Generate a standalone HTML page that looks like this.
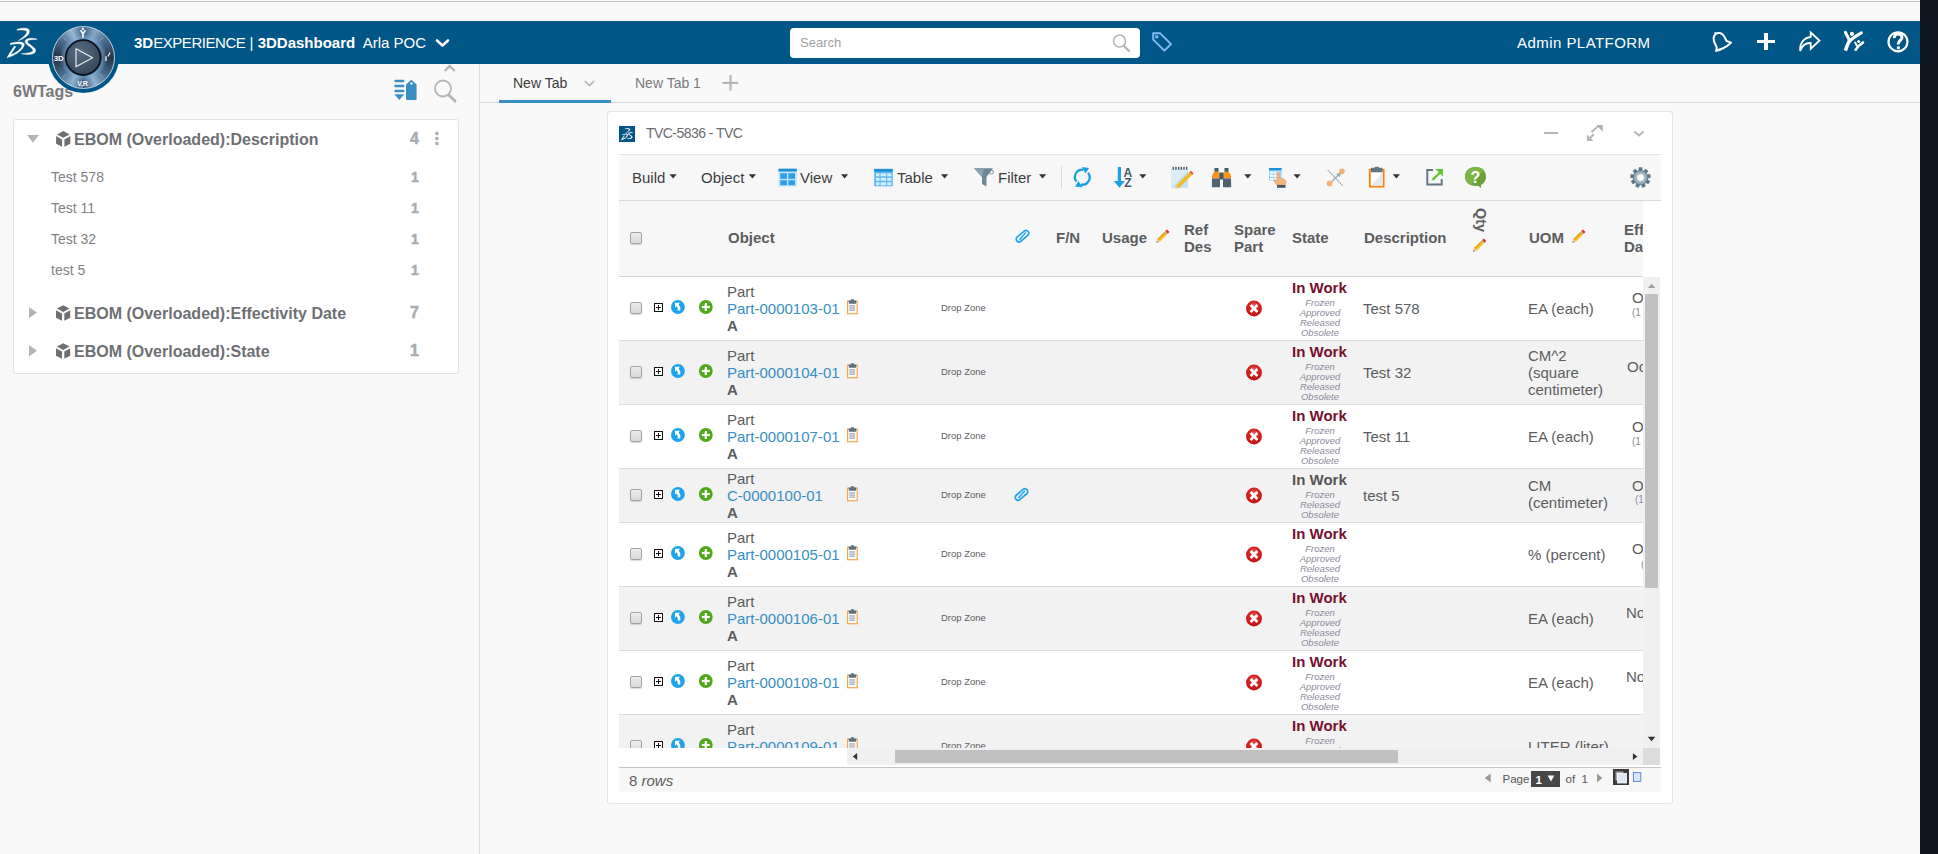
<!DOCTYPE html><html><head><meta charset="utf-8"><style>
*{box-sizing:border-box;margin:0;padding:0}
html,body{width:1938px;height:854px;overflow:hidden;background:#f9f9f9;font-family:"Liberation Sans",sans-serif;position:relative}
.a{position:absolute;white-space:nowrap}
.ht{color:#fff;font-size:15px;line-height:18px}
.tr{color:#808285;font-size:14px;line-height:16px}
.th{font-weight:bold;color:#6d6f73;font-size:16px;line-height:18px}
.cnt{color:#a9abae;font-weight:bold;font-size:14px;line-height:16px;-webkit-text-stroke:0.5px #a9abae}
.cb{width:12px;height:12px;border:1px solid #a3a3a3;border-radius:2px;background:linear-gradient(#ececec,#d9d9d9);box-shadow:0 1px 1px rgba(0,0,0,.15)}
.hc{font-weight:bold;color:#5b5d5e;font-size:15px;line-height:17px}
.rc{color:#5b5d5e;font-size:15px;line-height:17px}
.lnk{color:#368ec4}
.dz{font-size:9.5px;color:#5b5d5e;line-height:10px}
.iw{font-weight:bold;color:#76102f;font-size:15px;line-height:17px}
.st{font-style:italic;color:#8b8b9b;font-size:9.5px;line-height:10px;text-align:center;width:60px}
.tb{color:#3d3d3d;font-size:15px;line-height:18px}
.sm{color:#8b8b9b;font-size:10px;line-height:10px}
</style></head><body>
<div class="a" style="left:0;top:1px;width:1920px;height:1px;background:#c4c4c4"></div>
<div class="a" style="left:1920px;top:0;width:18px;height:854px;background:#0e141d"></div>
<div class="a" style="left:0;top:21px;width:1920px;height:43px;background:#005686"></div>
<div class="a ht" style="left:134px;top:34px;"><b>3D</b><span style="letter-spacing:-0.45px">EXPERIENCE</span> | <b>3DDashboard</b>&nbsp; Arla POC</div>
<div class="a ht" style="left:1517px;top:34px;letter-spacing:0.45px">Admin PLATFORM</div>
<div class="a" style="left:790px;top:28px;width:350px;height:30px;background:#fff;border-radius:4px"></div>
<div class="a" style="left:800px;top:35px;font-size:13px;line-height:15px;color:#a0a2a5">Search</div>
<div class="a" style="left:479px;top:64px;width:1px;height:790px;background:#dcdcdc"></div>
<div class="a" style="left:13px;top:83px;font-size:16px;line-height:18px;font-weight:bold;color:#77797c">6WTags</div>
<div class="a" style="left:13px;top:119px;width:446px;height:255px;background:#fff;border:1px solid #e2e2e2;border-radius:3px"></div>
<div class="a th" style="left:74px;top:131px">EBOM (Overloaded):Description</div>
<div class="a cnt" style="left:410px;top:130px;font-size:16px;line-height:18px">4</div>
<div class="a tr" style="left:51px;top:169px">Test 578</div>
<div class="a cnt" style="left:411px;top:169px">1</div>
<div class="a tr" style="left:51px;top:200px">Test 11</div>
<div class="a cnt" style="left:411px;top:200px">1</div>
<div class="a tr" style="left:51px;top:231px">Test 32</div>
<div class="a cnt" style="left:411px;top:231px">1</div>
<div class="a tr" style="left:51px;top:262px">test 5</div>
<div class="a cnt" style="left:411px;top:262px">1</div>
<div class="a th" style="left:74px;top:305px">EBOM (Overloaded):Effectivity Date</div>
<div class="a cnt" style="left:410px;top:304px;font-size:16px;line-height:18px">7</div>
<div class="a th" style="left:74px;top:343px">EBOM (Overloaded):State</div>
<div class="a cnt" style="left:410px;top:342px;font-size:16px;line-height:18px">1</div>
<div class="a" style="left:480px;top:102px;width:1440px;height:1px;background:#d9d9d9"></div>
<div class="a" style="left:513px;top:75px;font-size:14px;line-height:16px;color:#3d3d3d">New Tab</div>
<div class="a" style="left:499px;top:100px;width:112px;height:3px;background:#368ec4"></div>
<div class="a" style="left:635px;top:75px;font-size:14px;line-height:16px;color:#77797c">New Tab 1</div>
<div class="a" style="left:607px;top:111px;width:1066px;height:693px;background:#fff;border:1px solid #e3e3e3;border-radius:3px"></div>
<div class="a" style="left:619px;top:126px;width:16px;height:16px;background:#005686"></div>
<div class="a" style="left:646px;top:125px;font-size:14px;line-height:16px;letter-spacing:-0.55px;color:#6b6d70">TVC-5836 - TVC</div>
<div class="a" style="left:619px;top:154px;width:1042px;height:47px;background:#f7f7f7;border-top:1px solid #e2e2e2;border-bottom:1px solid #d9d9d9"></div>
<div class="a tb" style="left:632px;top:169px">Build</div>
<div class="a tb" style="left:701px;top:169px">Object</div>
<div class="a tb" style="left:800px;top:169px">View</div>
<div class="a tb" style="left:897px;top:169px">Table</div>
<div class="a tb" style="left:998px;top:169px">Filter</div>
<div class="a" style="left:1061px;top:166px;width:1px;height:23px;background:#dcdcdc"></div>
<div class="a" style="left:619px;top:201px;width:1024px;height:77px;background:#f7f7f7;border-bottom:2px solid #d6d6d6"></div>
<div class="a cb" style="left:630px;top:232px"></div>
<div class="a hc" style="left:728px;top:229px">Object</div>
<div class="a hc" style="left:1056px;top:229px">F/N</div>
<div class="a hc" style="left:1102px;top:229px">Usage</div>
<div class="a hc" style="left:1184px;top:221px">Ref<br>Des</div>
<div class="a hc" style="left:1234px;top:221px">Spare<br>Part</div>
<div class="a hc" style="left:1292px;top:229px">State</div>
<div class="a hc" style="left:1364px;top:229px">Description</div>
<div class="a hc" style="left:1529px;top:229px">UOM</div>
<div class="a" style="left:1624px;top:221px;width:19px;overflow:hidden"><div class="hc">Eff<br>Da</div></div>
<div class="a hc" style="left:1488.5px;top:207.5px;font-size:14.5px;transform-origin:0 0;transform:rotate(90deg)">Qty</div>
<div class="a" style="left:619px;top:277px;width:1024px;height:471px;overflow:hidden">
<div class="a" style="left:0;top:0px;width:1024px;height:64px;background:#fff;border-bottom:1px solid #dcdcdc"></div>
<div class="a cb" style="left:11px;top:25px"></div>
<div class="a rc" style="left:108px;top:6px">Part<br><span class="lnk">Part-0000103-01</span><br><b>A</b></div>
<div class="a dz" style="left:322px;top:26px">Drop Zone</div>
<div class="a iw" style="left:673px;top:2px;">In Work</div>
<div class="a st" style="left:671px;top:20.5px">Frozen<br>Approved<br>Released<br>Obsolete</div>
<div class="a rc" style="left:744px;top:23px">Test 578</div>
<div class="a rc" style="left:909px;top:23.0px">EA (each)</div>
<div class="a rc" style="left:1013px;top:11.5px">O</div>
<div class="a sm" style="left:1013px;top:31.30000000000001px">(1</div>
<div class="a" style="left:0;top:64px;width:1024px;height:64px;background:#f2f2f2;border-bottom:1px solid #dcdcdc"></div>
<div class="a cb" style="left:11px;top:89px"></div>
<div class="a rc" style="left:108px;top:70px">Part<br><span class="lnk">Part-0000104-01</span><br><b>A</b></div>
<div class="a dz" style="left:322px;top:90px">Drop Zone</div>
<div class="a iw" style="left:673px;top:66px;">In Work</div>
<div class="a st" style="left:671px;top:84.5px">Frozen<br>Approved<br>Released<br>Obsolete</div>
<div class="a rc" style="left:744px;top:87px">Test 32</div>
<div class="a rc" style="left:909px;top:70.0px">CM^2<br>(square<br>centimeter)</div>
<div class="a rc" style="left:1008px;top:81px">Oc</div>
<div class="a" style="left:0;top:128px;width:1024px;height:64px;background:#fff;border-bottom:1px solid #dcdcdc"></div>
<div class="a cb" style="left:11px;top:153px"></div>
<div class="a rc" style="left:108px;top:134px">Part<br><span class="lnk">Part-0000107-01</span><br><b>A</b></div>
<div class="a dz" style="left:322px;top:154px">Drop Zone</div>
<div class="a iw" style="left:673px;top:130px;">In Work</div>
<div class="a st" style="left:671px;top:148.5px">Frozen<br>Approved<br>Released<br>Obsolete</div>
<div class="a rc" style="left:744px;top:151px">Test 11</div>
<div class="a rc" style="left:909px;top:151.0px">EA (each)</div>
<div class="a rc" style="left:1013px;top:140.5px">O</div>
<div class="a sm" style="left:1013px;top:159.5px">(1</div>
<div class="a" style="left:0;top:192px;width:1024px;height:54px;background:#f2f2f2;border-bottom:1px solid #dcdcdc"></div>
<div class="a cb" style="left:11px;top:212px"></div>
<div class="a rc" style="left:108px;top:193px">Part<br><span class="lnk">C-0000100-01</span><br><b>A</b></div>
<div class="a dz" style="left:322px;top:213px">Drop Zone</div>
<div class="a iw" style="left:673px;top:194px;color:#555555;">In Work</div>
<div class="a st" style="left:671px;top:212.5px">Frozen<br>Released<br>Obsolete</div>
<div class="a rc" style="left:744px;top:210px">test 5</div>
<div class="a rc" style="left:909px;top:200px">CM<br>(centimeter)</div>
<div class="a rc" style="left:1013px;top:199.5px">O</div>
<div class="a sm" style="left:1016px;top:217.5px">(1</div>
<div class="a" style="left:0;top:246px;width:1024px;height:64px;background:#fff;border-bottom:1px solid #dcdcdc"></div>
<div class="a cb" style="left:11px;top:271px"></div>
<div class="a rc" style="left:108px;top:252px">Part<br><span class="lnk">Part-0000105-01</span><br><b>A</b></div>
<div class="a dz" style="left:322px;top:272px">Drop Zone</div>
<div class="a iw" style="left:673px;top:248px;">In Work</div>
<div class="a st" style="left:671px;top:266.5px">Frozen<br>Approved<br>Released<br>Obsolete</div>
<div class="a rc" style="left:909px;top:269.0px">% (percent)</div>
<div class="a rc" style="left:1013px;top:262.5px">O</div>
<div class="a sm" style="left:1022px;top:282.5px">(</div>
<div class="a" style="left:0;top:310px;width:1024px;height:64px;background:#f2f2f2;border-bottom:1px solid #dcdcdc"></div>
<div class="a cb" style="left:11px;top:335px"></div>
<div class="a rc" style="left:108px;top:316px">Part<br><span class="lnk">Part-0000106-01</span><br><b>A</b></div>
<div class="a dz" style="left:322px;top:336px">Drop Zone</div>
<div class="a iw" style="left:673px;top:312px;">In Work</div>
<div class="a st" style="left:671px;top:330.5px">Frozen<br>Approved<br>Released<br>Obsolete</div>
<div class="a rc" style="left:909px;top:333.0px">EA (each)</div>
<div class="a rc" style="left:1007px;top:327px">No</div>
<div class="a" style="left:0;top:374px;width:1024px;height:64px;background:#fff;border-bottom:1px solid #dcdcdc"></div>
<div class="a cb" style="left:11px;top:399px"></div>
<div class="a rc" style="left:108px;top:380px">Part<br><span class="lnk">Part-0000108-01</span><br><b>A</b></div>
<div class="a dz" style="left:322px;top:400px">Drop Zone</div>
<div class="a iw" style="left:673px;top:376px;">In Work</div>
<div class="a st" style="left:671px;top:394.5px">Frozen<br>Approved<br>Released<br>Obsolete</div>
<div class="a rc" style="left:909px;top:397.0px">EA (each)</div>
<div class="a rc" style="left:1007px;top:391px">No</div>
<div class="a" style="left:0;top:438px;width:1024px;height:64px;background:#f2f2f2;border-bottom:1px solid #dcdcdc"></div>
<div class="a cb" style="left:11px;top:463px"></div>
<div class="a rc" style="left:108px;top:444px">Part<br><span class="lnk">Part-0000109-01</span><br><b>A</b></div>
<div class="a dz" style="left:322px;top:464px">Drop Zone</div>
<div class="a iw" style="left:673px;top:440px;">In Work</div>
<div class="a st" style="left:671px;top:458.5px">Frozen<br>Approved<br>Released<br>Obsolete</div>
<div class="a rc" style="left:909px;top:461.0px">LITER (liter)</div>
</div>
<div class="a" style="left:619px;top:748px;width:228px;height:17px;background:#fff"></div>
<div class="a" style="left:847px;top:748px;width:796px;height:17px;background:#f0f0f0"></div>
<div class="a" style="left:895px;top:750px;width:503px;height:13px;background:#c1c1c1"></div>
<div class="a" style="left:1643px;top:277px;width:17px;height:471px;background:#f0f0f0"></div>
<div class="a" style="left:1645px;top:294px;width:13px;height:294px;background:#c1c1c1"></div>
<div class="a" style="left:1643px;top:748px;width:17px;height:17px;background:#dcdcdc"></div>
<div class="a" style="left:619px;top:767px;width:1042px;height:25px;background:#f7f7f7;border-top:1.5px solid #c4c4c4;border-radius:0 0 3px 3px"></div>
<div class="a" style="left:629px;top:772px;font-size:15px;line-height:17px;color:#5b5d5e">8 <i>rows</i></div>
<div class="a" style="left:1502.5px;top:773px;font-size:11.5px;line-height:13px;color:#555">Page</div>
<div class="a" style="left:1531px;top:771px;width:29px;height:16px;background:#474747"></div>
<div class="a" style="left:1535.5px;top:773.5px;font-size:11.5px;line-height:13px;color:#fff;font-weight:bold">1</div>
<div class="a" style="left:1565.5px;top:773px;font-size:11.5px;line-height:13px;color:#555">of&nbsp; 1</div>
<div class="a" style="left:1613px;top:769px;width:16px;height:16px;background:#3a3a3a"></div>
<div class="a" style="left:47.8px;top:21.5px;width:71px;height:71px;border-radius:50%;background:#005686"></div><div class="a" style="left:51.5px;top:25.9px;width:63px;height:63px;border-radius:50%;border:1px solid #c3d0db;background:radial-gradient(circle at 50% 50%, rgba(0,0,0,0) 17px, rgba(125,175,220,.55) 19px, rgba(0,0,0,0) 24px),conic-gradient(#3f5f80 0deg, #86a8c6 24deg, #4a6a8c 52deg, #24364a 90deg, #4a6a8c 128deg, #90b2d0 156deg, #3f5f80 180deg, #90b2d0 204deg, #4a6a8c 232deg, #1e2f42 270deg, #4a6a8c 308deg, #9ab8d4 336deg, #3f5f80 360deg)"></div><svg class="a" style="left:0;top:0" width="130" height="100" viewBox="0 0 130 100"><defs><radialGradient id="inner" cx="40%" cy="35%" r="70%"><stop offset="0" stop-color="#566c80"/><stop offset="1" stop-color="#34475a"/></radialGradient></defs><circle cx="83.1" cy="57.6" r="17.4" fill="url(#inner)" stroke="#0c131a" stroke-width="1.8"/><path d="M76,48.8 L92.6,57.8 L76,66.8 Z" fill="none" stroke="#e6edf2" stroke-width="1.2" stroke-linejoin="round"/><line x1="99.6" y1="74.0" x2="103.2" y2="77.6" stroke="#a8bccb" stroke-width="0.7"/><line x1="66.4" y1="74.0" x2="62.8" y2="77.6" stroke="#a8bccb" stroke-width="0.7"/><line x1="66.4" y1="40.8" x2="62.8" y2="37.2" stroke="#a8bccb" stroke-width="0.7"/><line x1="99.6" y1="40.8" x2="103.2" y2="37.2" stroke="#a8bccb" stroke-width="0.7"/><text x="53.8" y="61.3" font-size="8" font-weight="bold" fill="#fff" font-family="Liberation Sans" letter-spacing="-0.3">3D</text><text x="77.3" y="85.6" font-size="7" font-weight="bold" fill="#fff" font-family="Liberation Sans" letter-spacing="-0.2">V,R</text><text x="104.8" y="61.3" font-size="8" font-weight="bold" fill="#fff" font-family="Liberation Sans">i</text><path d="M108,56.5 L110,52.5" stroke="#fff" stroke-width="1.1"/><path d="M80.6,30.3 L83,33.6 L85.4,30.3 M83,33.6 L83,37.8" stroke="#fff" stroke-width="1.6" fill="none"/><circle cx="83" cy="28.9" r="1.3" fill="#dfe7ee"/></svg>
<svg class="a" style="left:0;top:0" width="1938" height="854" viewBox="0 0 1938 854"><defs><radialGradient id="redg" cx="50%" cy="35%" r="60%"><stop offset="0" stop-color="#ea6a6a"/><stop offset="0.5" stop-color="#d42525"/><stop offset="1" stop-color="#c41414"/></radialGradient><linearGradient id="ring" x1="0" y1="0" x2="1" y2="1"><stop offset="0" stop-color="#7f9bb5"/><stop offset="0.45" stop-color="#4d6d8c"/><stop offset="1" stop-color="#25384b"/></linearGradient><radialGradient id="gearg" cx="50%" cy="50%" r="50%"><stop offset="0.5" stop-color="#b3c4cc"/><stop offset="0.85" stop-color="#8ea6b1"/><stop offset="1" stop-color="#6a8695"/></radialGradient><clipPath id="rowclip"><rect x="619" y="277" width="1024" height="471"/></clipPath></defs><g id="dslogo" fill="#fff" stroke="#fff" stroke-width="0.45"><path d="M17,29.4 C20,28.3 24.5,27.8 27.5,28.6 C29.6,29.3 29.9,31.6 28.6,34 C27,36.8 22,39.3 18.3,40.7 C21.5,38.6 24.8,36 26.2,33.8 C27.3,32 27,30.6 25,30.2 C22.5,29.8 19.5,29.9 17,30.2 Z"/><path d="M10.2,43.4 C14,42.2 19.5,41.5 22.6,42.4 C24.6,43 24.7,45 23.4,47.3 C21,51.5 14.5,55.6 7,57.8 C9.2,53.8 11.8,49.6 14.5,46.1 L15.7,46.8 C13.8,50 11.8,52.8 10.3,55 C14.5,53.6 18.8,50.8 21,47.8 C22.4,45.8 22.3,44.3 20.5,44 C17.5,43.6 13.5,44 10.2,44.5 Z"/><path d="M37.2,39.2 C33.5,38 28.5,37.9 26.2,39.6 C24.6,40.9 24.8,42.8 26.2,44 C28,45.6 31.5,47.3 32.8,49.4 C33.5,50.8 32,52.2 29.5,52.7 C27,53.2 24,53.5 21.4,53.8 C25,54.7 30,54.9 33.5,53.6 C35.8,52.6 36.1,50.6 35,48.8 C33.5,46.5 30,44.6 28.4,43.2 C27,42 27.3,40.6 29,40.1 C31.2,39.5 34.5,39.5 37.2,39.2 Z"/></g><path d="M437,40.5 L442.5,45.5 L448,40.5" fill="none" stroke="#fff" stroke-width="2.6" stroke-linecap="round" stroke-linejoin="round"/><circle cx="1119.5" cy="41.1" r="6" fill="none" stroke="#b4b5b8" stroke-width="1.5"/><path d="M1124,46 L1129,51" stroke="#b4b5b8" stroke-width="2.4" stroke-linecap="round"/><path d="M1153.2,33.3 L1160.2,33.3 L1171,44.1 L1164.4,50.7 L1153.2,39.6 Z" fill="none" stroke="#7fbef5" stroke-width="1.9" stroke-linejoin="round"/><rect x="1155.3" y="35.3" width="3" height="3" fill="#7fbef5"/><path d="M1716,50.8 C1719.5,50.3 1727.5,46.8 1731,42.6 C1729.3,41.7 1727.8,41.6 1726.4,40.9 C1724.8,37.3 1723.8,33.6 1719.8,33 C1716.2,32.6 1713.8,34.8 1713.6,38.6 C1713.4,42.6 1716.4,45.4 1716.8,47.9 Z" fill="none" stroke="#fff" stroke-width="2" stroke-linejoin="round"/><path d="M1715.5,51.6 C1720.5,50.8 1728,47 1731.6,42.4 L1729.8,43.2 C1726,46.2 1720.5,48.6 1716.2,49.2 Z" fill="#fff"/><circle cx="1715.6" cy="33.2" r="1.3" fill="#fff"/><rect x="1764" y="33" width="4" height="17" fill="#fff"/><rect x="1757" y="40" width="18" height="3" fill="#fff"/><path d="M1810.7,32.5 L1819.5,40.5 L1810.7,48.8 L1810.7,43 C1806,42.8 1802,45.5 1800.2,51 C1799.5,44 1803.5,37.5 1810.7,37 Z" fill="none" stroke="#fff" stroke-width="1.8" stroke-linejoin="miter"/><path d="M1845.4,32.4 L1849.8,40.8" fill="none" stroke="#fff" stroke-width="3" stroke-linecap="round"/><path d="M1861.3,32.9 Q1853.5,37.3 1849.4,41.3" fill="none" stroke="#fff" stroke-width="3.2" stroke-linecap="round"/><path d="M1849.6,40.3 Q1847.2,45 1845.4,50.6" fill="none" stroke="#fff" stroke-width="3.5" stroke-linecap="butt"/><circle cx="1851.9" cy="33.9" r="2.1" fill="#fff"/><path d="M1863.8,41.8 Q1858,45.5 1855,50.6" fill="none" stroke="#fff" stroke-width="2.6" stroke-linecap="butt"/><path d="M1854.8,41.9 L1857.2,46.2" fill="none" stroke="#fff" stroke-width="2"/><circle cx="1858.7" cy="41.4" r="1.5" fill="#fff"/><circle cx="1898" cy="41.8" r="9.5" fill="none" stroke="#fff" stroke-width="2.2"/><path d="M1894.3,38.2 C1894.1,35.2 1896,34 1898.1,34 C1900.4,34 1902,35.4 1902,37.5 C1902,40.2 1898.3,40.6 1898.3,43.6 L1898.3,44.6" fill="none" stroke="#fff" stroke-width="3"/><rect x="1896.9" y="46.4" width="2.9" height="2.8" fill="#fff"/><path d="M444.7,71 L449.7,66 L454.7,71" fill="none" stroke="#b4b5b8" stroke-width="2.4"/><rect x="394.4" y="79.8" width="10" height="2.4" rx="1" fill="#3a8ec4"/><rect x="394.4" y="84.8" width="10" height="2.4" rx="1" fill="#3a8ec4"/><rect x="394.4" y="89.8" width="10" height="2.4" rx="1" fill="#3a8ec4"/><path d="M394.4,94.3 L404.3,94.3 L399.3,100 Z" fill="#3a8ec4"/><path d="M406,84.5 L411.3,79.8 L416.6,84.5 L416.6,99 Q416.6,100 415.6,100 L407,100 Q406,100 406,99 Z" fill="#3a8ec4"/><path d="M411.5,82 L413,83.5 L411.5,85 L410,83.5 Z" fill="#fff"/><circle cx="443" cy="88.5" r="8" fill="none" stroke="#b4b5b8" stroke-width="1.8"/><path d="M448.8,95 L455,101" stroke="#b4b5b8" stroke-width="3" stroke-linecap="round"/><path d="M27,135.1 L39,135.1 L32.9,142.8 Z" fill="#b2b4b8"/><path d="M29,307 L36.9,312.6 L29,318.3 Z" fill="#b2b4b8"/><path d="M29,345 L36.9,350.7 L29,356.4 Z" fill="#b2b4b8"/><g fill="#6d6f73" transform="translate(63.3,131.1)"><path d="M0,0 L6.3,3.4 L0,6.7 L-6.3,3.4 Z"/><path d="M-7.2,5 L-1.2,8.3 L-1.2,15.6 L-7.2,12.6 Z"/><path d="M7,5 L1.1,8.3 L1.1,15.6 L7,12.6 Z"/></g><g fill="#6d6f73" transform="translate(63.2,305.2)"><path d="M0,0 L6.3,3.4 L0,6.7 L-6.3,3.4 Z"/><path d="M-7.2,5 L-1.2,8.3 L-1.2,15.6 L-7.2,12.6 Z"/><path d="M7,5 L1.1,8.3 L1.1,15.6 L7,12.6 Z"/></g><g fill="#6d6f73" transform="translate(63.2,343.2)"><path d="M0,0 L6.3,3.4 L0,6.7 L-6.3,3.4 Z"/><path d="M-7.2,5 L-1.2,8.3 L-1.2,15.6 L-7.2,12.6 Z"/><path d="M7,5 L1.1,8.3 L1.1,15.6 L7,12.6 Z"/></g><circle cx="436.9" cy="133.4" r="1.8" fill="#a9abae"/><circle cx="436.9" cy="138.6" r="1.8" fill="#a9abae"/><circle cx="436.9" cy="143.6" r="1.8" fill="#a9abae"/><path d="M584.8,81.2 L589.4,85.6 L594,81.2" fill="none" stroke="#b4b5b8" stroke-width="1.6"/><rect x="729.4" y="75" width="2.2" height="15.5" fill="#b4b5b8"/><rect x="722.5" y="81.8" width="15.7" height="2.2" fill="#b4b5b8"/><use href="#dslogo" transform="translate(618.2,117) scale(0.4)"/><rect x="1544" y="132" width="14" height="2" fill="#b4b5b8"/><path d="M1596.2,125.1 L1602.8,125.1 L1602.8,131.7 Z M1586.9,134.4 L1586.9,140.9 L1593.5,140.9 Z" fill="#b4b5b8"/><path d="M1591.5,132 L1598.5,126 M1589.5,138.5 L1593.8,134.2" stroke="#b4b5b8" stroke-width="2"/><path d="M1634.3,131.5 L1639,135.5 L1643.7,131.5" fill="none" stroke="#b4b5b8" stroke-width="1.8"/><path d="M669.5,174.3 L676.7,174.3 L673.1,178.6 Z" fill="#333"/><path d="M748.8,174.3 L756.0,174.3 L752.4,178.6 Z" fill="#333"/><path d="M841,174.3 L848.2,174.3 L844.6,178.6 Z" fill="#333"/><path d="M941,174.3 L948.2,174.3 L944.6,178.6 Z" fill="#333"/><path d="M1039,174.3 L1046.2,174.3 L1042.6,178.6 Z" fill="#333"/><path d="M1139.2,174.3 L1146.4,174.3 L1142.8,178.6 Z" fill="#333"/><path d="M1244.2,174.3 L1251.4,174.3 L1247.8,178.6 Z" fill="#333"/><path d="M1293.5,174.3 L1300.7,174.3 L1297.1,178.6 Z" fill="#333"/><path d="M1392.8,174.3 L1400.0,174.3 L1396.3999999999999,178.6 Z" fill="#333"/><rect x="778.5" y="168.7" width="18.3" height="17.9" fill="#bfe3fa"/><rect x="778.5" y="168.7" width="18.3" height="2.8" fill="#1a8fd8"/><rect x="780.3" y="173.3" width="6.6" height="5.5" fill="#2a9ee6"/><rect x="788.4" y="173.3" width="6.6" height="5.5" fill="#2a9ee6"/><rect x="780.3" y="180.2" width="6.6" height="5" fill="#2a9ee6"/><rect x="788.4" y="180.2" width="6.6" height="5" fill="#2a9ee6"/><rect x="874.2" y="168.9" width="18.6" height="17.4" fill="#5bb8f0"/><rect x="874.2" y="168.9" width="18.6" height="2.8" fill="#1a8fd8"/><rect x="876" y="173.3" width="3.5" height="3" fill="#d6eefc"/><rect x="880.6" y="173.3" width="5.5" height="3" fill="#d6eefc"/><rect x="887.2" y="173.3" width="4.2" height="3" fill="#d6eefc"/><rect x="876" y="177.8" width="3.5" height="3" fill="#d6eefc"/><rect x="880.6" y="177.8" width="5.5" height="3" fill="#d6eefc"/><rect x="887.2" y="177.8" width="4.2" height="3" fill="#d6eefc"/><rect x="876" y="182.3" width="3.5" height="3" fill="#d6eefc"/><rect x="880.6" y="182.3" width="5.5" height="3" fill="#d6eefc"/><rect x="887.2" y="182.3" width="4.2" height="3" fill="#d6eefc"/><path d="M974,168.2 L993,168.2 L986.5,177 L986.5,186.5 L982,184 L982,177 Z" fill="#6d8795"/><path d="M974,168.2 L984,168.2 L982,177 Z" fill="#8aa2ae"/><circle cx="991.5" cy="172.2" r="2" fill="none" stroke="#6d8795" stroke-width="0.9"/><path d="M1076.5,181.5 A7.3,7.3 0 0 1 1083.5,169.8" fill="none" stroke="#1ba1e2" stroke-width="2.3"/><path d="M1088,172.8 A7.3,7.3 0 0 1 1081,184.6" fill="none" stroke="#1ba1e2" stroke-width="2.3"/><path d="M1082,167 L1089,168 L1085.5,173.5 Z" fill="#1ba1e2"/><path d="M1082.5,187.5 L1075,186.5 L1078.5,181 Z" fill="#1ba1e2"/><rect x="1117.8" y="167" width="3.2" height="16" fill="#1ba1e2"/><path d="M1113.8,181 L1125,181 L1119.4,187.8 Z" fill="#1ba1e2"/><text x="1123.6" y="177.3" font-size="12" font-weight="bold" fill="#455a64" font-family="Liberation Sans">A</text><text x="1124.2" y="186.9" font-size="12" font-weight="bold" fill="#455a64" font-family="Liberation Sans">Z</text><rect x="1171" y="168.5" width="17" height="19.3" fill="#dcedf8"/><path d="M1171,187.8 L1188,170 L1188,187.8 Z" fill="#c5e2f5"/><rect x="1172.5" y="166.8" width="1.4" height="3" fill="#455a64"/><rect x="1175.2" y="166.8" width="1.4" height="3" fill="#455a64"/><rect x="1177.9" y="166.8" width="1.4" height="3" fill="#455a64"/><rect x="1180.6" y="166.8" width="1.4" height="3" fill="#455a64"/><rect x="1183.3" y="166.8" width="1.4" height="3" fill="#455a64"/><rect x="1186.0" y="166.8" width="1.4" height="3" fill="#455a64"/><path d="M1176,185.5 L1189.5,172 L1192.3,174.8 L1178.8,188.3 Z" fill="#f4b92a"/><path d="M1189.5,172 L1190.8,170.7 L1193.6,173.5 L1192.3,174.8 Z" fill="#e8462b"/><path d="M1176,185.5 L1178.8,188.3 L1175,189 Z" fill="#f3c9a0"/><rect x="1214.5" y="168" width="4" height="4" fill="#455a64"/><rect x="1224.5" y="168" width="4" height="4" fill="#455a64"/><path d="M1212,176 Q1213,171.5 1216.5,171.5 Q1220,171.5 1220,175 L1220,178.5 L1212,178.5 Z" fill="#f7931e"/><path d="M1223,175 Q1223,171.5 1226.5,171.5 Q1230,171.5 1231,176 L1231,178.5 L1223,178.5 Z" fill="#f7931e"/><rect x="1219.5" y="172.5" width="4" height="7" fill="#455a64"/><path d="M1212,178.5 L1220,178.5 L1220,187.2 L1211.8,187.2 Z" fill="#4f6370"/><path d="M1223,178.5 L1231,178.5 L1231.2,187.2 L1223,187.2 Z" fill="#4f6370"/><rect x="1269" y="168" width="12.5" height="12.5" fill="#8fd0f7"/><rect x="1269" y="168" width="12.5" height="2.2" fill="#1a8fd8"/><rect x="1270" y="171.5" width="3" height="2.2" fill="#fff"/><rect x="1273.6" y="171.5" width="3" height="2.2" fill="#fff"/><rect x="1277.2" y="171.5" width="3" height="2.2" fill="#fff"/><rect x="1270" y="174.7" width="3" height="2.2" fill="#fff"/><rect x="1273.6" y="174.7" width="3" height="2.2" fill="#fff"/><rect x="1277.2" y="174.7" width="3" height="2.2" fill="#fff"/><rect x="1270" y="177.9" width="3" height="2.2" fill="#fff"/><rect x="1273.6" y="177.9" width="3" height="2.2" fill="#fff"/><rect x="1277.2" y="177.9" width="3" height="2.2" fill="#fff"/><path d="M1277.3,172.5 Q1278.5,171.5 1279.7,172.5 L1279.7,178 L1283,178.5 Q1286,179.5 1286,182.5 L1285.5,185 L1276.5,185 L1273.8,180.5 Q1274.5,179 1276,180 L1277.3,181 Z" fill="#f5b57a" stroke="#c88550" stroke-width="0.4"/><rect x="1277" y="185" width="8.5" height="2.8" fill="#455a64"/><path d="M1328,170.3 L1342.5,185.5" stroke="#4a4a4a" stroke-width="1" stroke-dasharray="1.6,1.2"/><path d="M1330,183.3 L1340,173.5" stroke="#98acb6" stroke-width="1.3"/><path d="M1341,172.5 L1336.3,173.8 L1339.8,177.3 Z" fill="#98acb6"/><circle cx="1341.9" cy="171.3" r="2.9" fill="#f4b27a"/><circle cx="1329.6" cy="183.5" r="2.9" fill="#f4b27a"/><rect x="1369.8" y="169.8" width="13.8" height="16.8" fill="#fff" stroke="#ff7f00" stroke-width="1.8"/><path d="M1371,186 L1382.5,172 L1382.5,186 Z" fill="#e6e9ec"/><path d="M1371,167.8 L1382.5,167.8 L1382.5,172.3 L1371,172.3 Z" fill="#5f7683"/><rect x="1374.5" y="166.8" width="4.5" height="2" rx="1" fill="#5f7683"/><path d="M1433,170 L1427.3,170 L1427.3,184.5 L1441.7,184.5 L1441.7,179" fill="none" stroke="#5f7683" stroke-width="1.9"/><path d="M1432.5,180 L1440,172.5" stroke="#64c52e" stroke-width="2.3"/><path d="M1435.5,169 L1443,169 L1443,176.5 Z" fill="#64c52e"/><path d="M1475.5,167 C1481.5,167 1486,171 1486,176.5 C1486,180.5 1484,183.5 1481,185 L1481,188 L1478,185.8 C1477,186 1476.3,186 1475.5,186 C1469.5,186 1465,182 1465,176.5 C1465,171 1469.5,167 1475.5,167 Z" fill="#6a9f3a"/><path d="M1475.5,167 C1469.5,167 1465,171 1465,176.5 C1465,180.5 1467.5,183.5 1470.5,185 L1484,170 C1482,168 1479,167 1475.5,167 Z" fill="#7bb542"/><text x="1475.5" y="182.5" font-size="16" font-weight="bold" fill="#fff" text-anchor="middle" font-family="Liberation Sans">?</text><path d="M1638.64,170.65 L1638.92,167.62 L1642.08,167.62 L1642.36,170.65 L1643.54,171.07 L1645.70,168.94 L1648.12,170.97 L1646.40,173.47 L1647.03,174.56 L1650.05,174.31 L1650.60,177.42 L1647.67,178.23 L1647.45,179.46 L1649.93,181.22 L1648.35,183.96 L1645.59,182.69 L1644.63,183.50 L1645.40,186.43 L1642.43,187.51 L1641.13,184.77 L1639.87,184.77 L1638.57,187.51 L1635.60,186.43 L1636.37,183.50 L1635.41,182.69 L1632.65,183.96 L1631.07,181.22 L1633.55,179.46 L1633.33,178.23 L1630.40,177.42 L1630.95,174.31 L1633.97,174.56 L1634.60,173.47 L1632.88,170.97 L1635.30,168.94 L1637.46,171.07 Z" fill="#587685" stroke="#587685" stroke-width="0.4" stroke-linejoin="round"/><circle cx="1640.5" cy="177.6" r="7.2" fill="url(#gearg)"/><circle cx="1640.5" cy="177.6" r="3.3" fill="#fafafa"/><g transform="translate(1022.5,236.2) rotate(-40)"><rect x="-7.3" y="-2.8" width="14.6" height="5.6" rx="2.8" fill="none" stroke="#1ea3ec" stroke-width="1.7"/><path d="M-4.6,0.8 L5,-0.8" stroke="#1ea3ec" stroke-width="1.4"/></g><g transform="translate(1021.5,494.5) rotate(-40)"><rect x="-7.3" y="-2.8" width="14.6" height="5.6" rx="2.8" fill="none" stroke="#1ea3ec" stroke-width="1.7"/><path d="M-4.6,0.8 L5,-0.8" stroke="#1ea3ec" stroke-width="1.4"/></g><g transform="translate(1156.5,242.5) rotate(-45)"><rect x="3" y="-1.8" width="10" height="3.6" fill="#f5c02a"/><rect x="3" y="-1.8" width="10" height="1.2" fill="#e5a117"/><rect x="13" y="-1.8" width="1.3" height="3.6" fill="#b0b0b0"/><rect x="14.3" y="-1.8" width="2.4" height="3.6" fill="#d9391f"/><path d="M0,0 L3,-1.8 L3,1.8 Z" fill="#f0c090"/><path d="M0,0 L1.2,-0.8 L1.2,0.8 Z" fill="#333"/></g><g transform="translate(1473.3,251.5) rotate(-45)"><rect x="3" y="-1.8" width="10" height="3.6" fill="#f5c02a"/><rect x="3" y="-1.8" width="10" height="1.2" fill="#e5a117"/><rect x="13" y="-1.8" width="1.3" height="3.6" fill="#b0b0b0"/><rect x="14.3" y="-1.8" width="2.4" height="3.6" fill="#d9391f"/><path d="M0,0 L3,-1.8 L3,1.8 Z" fill="#f0c090"/><path d="M0,0 L1.2,-0.8 L1.2,0.8 Z" fill="#333"/></g><g transform="translate(1572.5,242.5) rotate(-45)"><rect x="3" y="-1.8" width="10" height="3.6" fill="#f5c02a"/><rect x="3" y="-1.8" width="10" height="1.2" fill="#e5a117"/><rect x="13" y="-1.8" width="1.3" height="3.6" fill="#b0b0b0"/><rect x="14.3" y="-1.8" width="2.4" height="3.6" fill="#d9391f"/><path d="M0,0 L3,-1.8 L3,1.8 Z" fill="#f0c090"/><path d="M0,0 L1.2,-0.8 L1.2,0.8 Z" fill="#333"/></g><g clip-path="url(#rowclip)"><g><rect x="654.5" y="303.5" width="8" height="8" fill="#fff" stroke="#111" stroke-width="1"/><rect x="656" y="307" width="5" height="1" fill="#111"/><rect x="658" y="305" width="1" height="5" fill="#111"/><circle cx="677.9" cy="307" r="6.9" fill="#1ea3ec"/><path d="M675,302.8 L680,302.8 L678.6,304.4 L680.3,307.2 L680.3,310.6 L677.7,310.6 L677.7,307.8 L676.6,306.2 L675,307.8 Z" fill="#fff"/><circle cx="705.8" cy="307" r="6.9" fill="#52a81c"/><rect x="701.8" y="305.9" width="8" height="2.2" fill="#fff"/><rect x="704.7" y="303" width="2.2" height="8" fill="#fff"/><rect x="847.6" y="301.1" width="9.6" height="12.6" fill="#fff" stroke="#f9a24a" stroke-width="1.2"/><path d="M848.6,300.5 L856.4,300.5 L856,303.7 L849,303.7 Z" fill="#5a7280"/><rect x="850.8" y="299.2" width="3.4" height="1.8" rx="0.8" fill="#5a7280"/><rect x="849.2" y="305.4" width="6" height="1.1" fill="#8c9ca6"/><rect x="849.2" y="307.5" width="6" height="1.1" fill="#8c9ca6"/><rect x="849.2" y="309.59999999999997" width="6" height="1.1" fill="#8c9ca6"/><circle cx="1254" cy="308.5" r="7.9" fill="url(#redg)"/><path d="M1250.6,305L1257.4,312 M1257.4,305 L1250.6,312" stroke="#fff" stroke-width="2.6"/></g><g><rect x="654.5" y="367.5" width="8" height="8" fill="#fff" stroke="#111" stroke-width="1"/><rect x="656" y="371" width="5" height="1" fill="#111"/><rect x="658" y="369" width="1" height="5" fill="#111"/><circle cx="677.9" cy="371" r="6.9" fill="#1ea3ec"/><path d="M675,366.8 L680,366.8 L678.6,368.4 L680.3,371.2 L680.3,374.6 L677.7,374.6 L677.7,371.8 L676.6,370.2 L675,371.8 Z" fill="#fff"/><circle cx="705.8" cy="371" r="6.9" fill="#52a81c"/><rect x="701.8" y="369.9" width="8" height="2.2" fill="#fff"/><rect x="704.7" y="367" width="2.2" height="8" fill="#fff"/><rect x="847.6" y="365.1" width="9.6" height="12.6" fill="#fff" stroke="#f9a24a" stroke-width="1.2"/><path d="M848.6,364.5 L856.4,364.5 L856,367.7 L849,367.7 Z" fill="#5a7280"/><rect x="850.8" y="363.2" width="3.4" height="1.8" rx="0.8" fill="#5a7280"/><rect x="849.2" y="369.4" width="6" height="1.1" fill="#8c9ca6"/><rect x="849.2" y="371.5" width="6" height="1.1" fill="#8c9ca6"/><rect x="849.2" y="373.59999999999997" width="6" height="1.1" fill="#8c9ca6"/><circle cx="1254" cy="372.5" r="7.9" fill="url(#redg)"/><path d="M1250.6,369L1257.4,376 M1257.4,369 L1250.6,376" stroke="#fff" stroke-width="2.6"/></g><g><rect x="654.5" y="431.5" width="8" height="8" fill="#fff" stroke="#111" stroke-width="1"/><rect x="656" y="435" width="5" height="1" fill="#111"/><rect x="658" y="433" width="1" height="5" fill="#111"/><circle cx="677.9" cy="435" r="6.9" fill="#1ea3ec"/><path d="M675,430.8 L680,430.8 L678.6,432.4 L680.3,435.2 L680.3,438.6 L677.7,438.6 L677.7,435.8 L676.6,434.2 L675,435.8 Z" fill="#fff"/><circle cx="705.8" cy="435" r="6.9" fill="#52a81c"/><rect x="701.8" y="433.9" width="8" height="2.2" fill="#fff"/><rect x="704.7" y="431" width="2.2" height="8" fill="#fff"/><rect x="847.6" y="429.1" width="9.6" height="12.6" fill="#fff" stroke="#f9a24a" stroke-width="1.2"/><path d="M848.6,428.5 L856.4,428.5 L856,431.7 L849,431.7 Z" fill="#5a7280"/><rect x="850.8" y="427.2" width="3.4" height="1.8" rx="0.8" fill="#5a7280"/><rect x="849.2" y="433.4" width="6" height="1.1" fill="#8c9ca6"/><rect x="849.2" y="435.5" width="6" height="1.1" fill="#8c9ca6"/><rect x="849.2" y="437.59999999999997" width="6" height="1.1" fill="#8c9ca6"/><circle cx="1254" cy="436.5" r="7.9" fill="url(#redg)"/><path d="M1250.6,433L1257.4,440 M1257.4,433 L1250.6,440" stroke="#fff" stroke-width="2.6"/></g><g><rect x="654.5" y="490.5" width="8" height="8" fill="#fff" stroke="#111" stroke-width="1"/><rect x="656" y="494" width="5" height="1" fill="#111"/><rect x="658" y="492" width="1" height="5" fill="#111"/><circle cx="677.9" cy="494" r="6.9" fill="#1ea3ec"/><path d="M675,489.8 L680,489.8 L678.6,491.4 L680.3,494.2 L680.3,497.6 L677.7,497.6 L677.7,494.8 L676.6,493.2 L675,494.8 Z" fill="#fff"/><circle cx="705.8" cy="494" r="6.9" fill="#52a81c"/><rect x="701.8" y="492.9" width="8" height="2.2" fill="#fff"/><rect x="704.7" y="490" width="2.2" height="8" fill="#fff"/><rect x="847.6" y="488.1" width="9.6" height="12.6" fill="#fff" stroke="#f9a24a" stroke-width="1.2"/><path d="M848.6,487.5 L856.4,487.5 L856,490.7 L849,490.7 Z" fill="#5a7280"/><rect x="850.8" y="486.2" width="3.4" height="1.8" rx="0.8" fill="#5a7280"/><rect x="849.2" y="492.4" width="6" height="1.1" fill="#8c9ca6"/><rect x="849.2" y="494.5" width="6" height="1.1" fill="#8c9ca6"/><rect x="849.2" y="496.59999999999997" width="6" height="1.1" fill="#8c9ca6"/><circle cx="1254" cy="495.5" r="7.9" fill="url(#redg)"/><path d="M1250.6,492L1257.4,499 M1257.4,492 L1250.6,499" stroke="#fff" stroke-width="2.6"/></g><g><rect x="654.5" y="549.5" width="8" height="8" fill="#fff" stroke="#111" stroke-width="1"/><rect x="656" y="553" width="5" height="1" fill="#111"/><rect x="658" y="551" width="1" height="5" fill="#111"/><circle cx="677.9" cy="553" r="6.9" fill="#1ea3ec"/><path d="M675,548.8 L680,548.8 L678.6,550.4 L680.3,553.2 L680.3,556.6 L677.7,556.6 L677.7,553.8 L676.6,552.2 L675,553.8 Z" fill="#fff"/><circle cx="705.8" cy="553" r="6.9" fill="#52a81c"/><rect x="701.8" y="551.9" width="8" height="2.2" fill="#fff"/><rect x="704.7" y="549" width="2.2" height="8" fill="#fff"/><rect x="847.6" y="547.1" width="9.6" height="12.6" fill="#fff" stroke="#f9a24a" stroke-width="1.2"/><path d="M848.6,546.5 L856.4,546.5 L856,549.7 L849,549.7 Z" fill="#5a7280"/><rect x="850.8" y="545.2" width="3.4" height="1.8" rx="0.8" fill="#5a7280"/><rect x="849.2" y="551.4" width="6" height="1.1" fill="#8c9ca6"/><rect x="849.2" y="553.5" width="6" height="1.1" fill="#8c9ca6"/><rect x="849.2" y="555.6" width="6" height="1.1" fill="#8c9ca6"/><circle cx="1254" cy="554.5" r="7.9" fill="url(#redg)"/><path d="M1250.6,551L1257.4,558 M1257.4,551 L1250.6,558" stroke="#fff" stroke-width="2.6"/></g><g><rect x="654.5" y="613.5" width="8" height="8" fill="#fff" stroke="#111" stroke-width="1"/><rect x="656" y="617" width="5" height="1" fill="#111"/><rect x="658" y="615" width="1" height="5" fill="#111"/><circle cx="677.9" cy="617" r="6.9" fill="#1ea3ec"/><path d="M675,612.8 L680,612.8 L678.6,614.4 L680.3,617.2 L680.3,620.6 L677.7,620.6 L677.7,617.8 L676.6,616.2 L675,617.8 Z" fill="#fff"/><circle cx="705.8" cy="617" r="6.9" fill="#52a81c"/><rect x="701.8" y="615.9" width="8" height="2.2" fill="#fff"/><rect x="704.7" y="613" width="2.2" height="8" fill="#fff"/><rect x="847.6" y="611.1" width="9.6" height="12.6" fill="#fff" stroke="#f9a24a" stroke-width="1.2"/><path d="M848.6,610.5 L856.4,610.5 L856,613.7 L849,613.7 Z" fill="#5a7280"/><rect x="850.8" y="609.2" width="3.4" height="1.8" rx="0.8" fill="#5a7280"/><rect x="849.2" y="615.4" width="6" height="1.1" fill="#8c9ca6"/><rect x="849.2" y="617.5" width="6" height="1.1" fill="#8c9ca6"/><rect x="849.2" y="619.6" width="6" height="1.1" fill="#8c9ca6"/><circle cx="1254" cy="618.5" r="7.9" fill="url(#redg)"/><path d="M1250.6,615L1257.4,622 M1257.4,615 L1250.6,622" stroke="#fff" stroke-width="2.6"/></g><g><rect x="654.5" y="677.5" width="8" height="8" fill="#fff" stroke="#111" stroke-width="1"/><rect x="656" y="681" width="5" height="1" fill="#111"/><rect x="658" y="679" width="1" height="5" fill="#111"/><circle cx="677.9" cy="681" r="6.9" fill="#1ea3ec"/><path d="M675,676.8 L680,676.8 L678.6,678.4 L680.3,681.2 L680.3,684.6 L677.7,684.6 L677.7,681.8 L676.6,680.2 L675,681.8 Z" fill="#fff"/><circle cx="705.8" cy="681" r="6.9" fill="#52a81c"/><rect x="701.8" y="679.9" width="8" height="2.2" fill="#fff"/><rect x="704.7" y="677" width="2.2" height="8" fill="#fff"/><rect x="847.6" y="675.1" width="9.6" height="12.6" fill="#fff" stroke="#f9a24a" stroke-width="1.2"/><path d="M848.6,674.5 L856.4,674.5 L856,677.7 L849,677.7 Z" fill="#5a7280"/><rect x="850.8" y="673.2" width="3.4" height="1.8" rx="0.8" fill="#5a7280"/><rect x="849.2" y="679.4" width="6" height="1.1" fill="#8c9ca6"/><rect x="849.2" y="681.5" width="6" height="1.1" fill="#8c9ca6"/><rect x="849.2" y="683.6" width="6" height="1.1" fill="#8c9ca6"/><circle cx="1254" cy="682.5" r="7.9" fill="url(#redg)"/><path d="M1250.6,679L1257.4,686 M1257.4,679 L1250.6,686" stroke="#fff" stroke-width="2.6"/></g><g><rect x="654.5" y="741.5" width="8" height="8" fill="#fff" stroke="#111" stroke-width="1"/><rect x="656" y="745" width="5" height="1" fill="#111"/><rect x="658" y="743" width="1" height="5" fill="#111"/><circle cx="677.9" cy="745" r="6.9" fill="#1ea3ec"/><path d="M675,740.8 L680,740.8 L678.6,742.4 L680.3,745.2 L680.3,748.6 L677.7,748.6 L677.7,745.8 L676.6,744.2 L675,745.8 Z" fill="#fff"/><circle cx="705.8" cy="745" r="6.9" fill="#52a81c"/><rect x="701.8" y="743.9" width="8" height="2.2" fill="#fff"/><rect x="704.7" y="741" width="2.2" height="8" fill="#fff"/><rect x="847.6" y="739.1" width="9.6" height="12.6" fill="#fff" stroke="#f9a24a" stroke-width="1.2"/><path d="M848.6,738.5 L856.4,738.5 L856,741.7 L849,741.7 Z" fill="#5a7280"/><rect x="850.8" y="737.2" width="3.4" height="1.8" rx="0.8" fill="#5a7280"/><rect x="849.2" y="743.4" width="6" height="1.1" fill="#8c9ca6"/><rect x="849.2" y="745.5" width="6" height="1.1" fill="#8c9ca6"/><rect x="849.2" y="747.6" width="6" height="1.1" fill="#8c9ca6"/><circle cx="1254" cy="746.5" r="7.9" fill="url(#redg)"/><path d="M1250.6,743L1257.4,750 M1257.4,743 L1250.6,750" stroke="#fff" stroke-width="2.6"/></g></g><path d="M857.2,753 L857.2,760 L852.8,756.5 Z" fill="#333"/><path d="M1632.9,753.2 L1632.9,760 L1637.4,756.6 Z" fill="#333"/><path d="M1647.9,287.9 L1655.3,287.9 L1651.6,283.7 Z" fill="#a0a0a0"/><path d="M1647.8,736.7 L1655.3,736.7 L1651.55,741.2 Z" fill="#333"/><path d="M1490.7,773.4 L1490.7,782.4 L1484.7,777.9 Z" fill="#999"/><path d="M1597,773.4 L1597,782.4 L1602.3,777.9 Z" fill="#999"/><path d="M1547.6,775.6 L1554.3,775.6 L1551,781.6 Z" fill="#fff"/><rect x="1615.5" y="771.5" width="8" height="9" fill="#aaa"/><rect x="1617.5" y="773.5" width="9" height="9.5" fill="#dfe8f7" stroke="#fff" stroke-width="0.8"/><rect x="1633.4" y="772.6" width="7.4" height="8.8" fill="#dbe6fb" stroke="#4f7fd8" stroke-width="0.9"/></svg>
</body></html>
